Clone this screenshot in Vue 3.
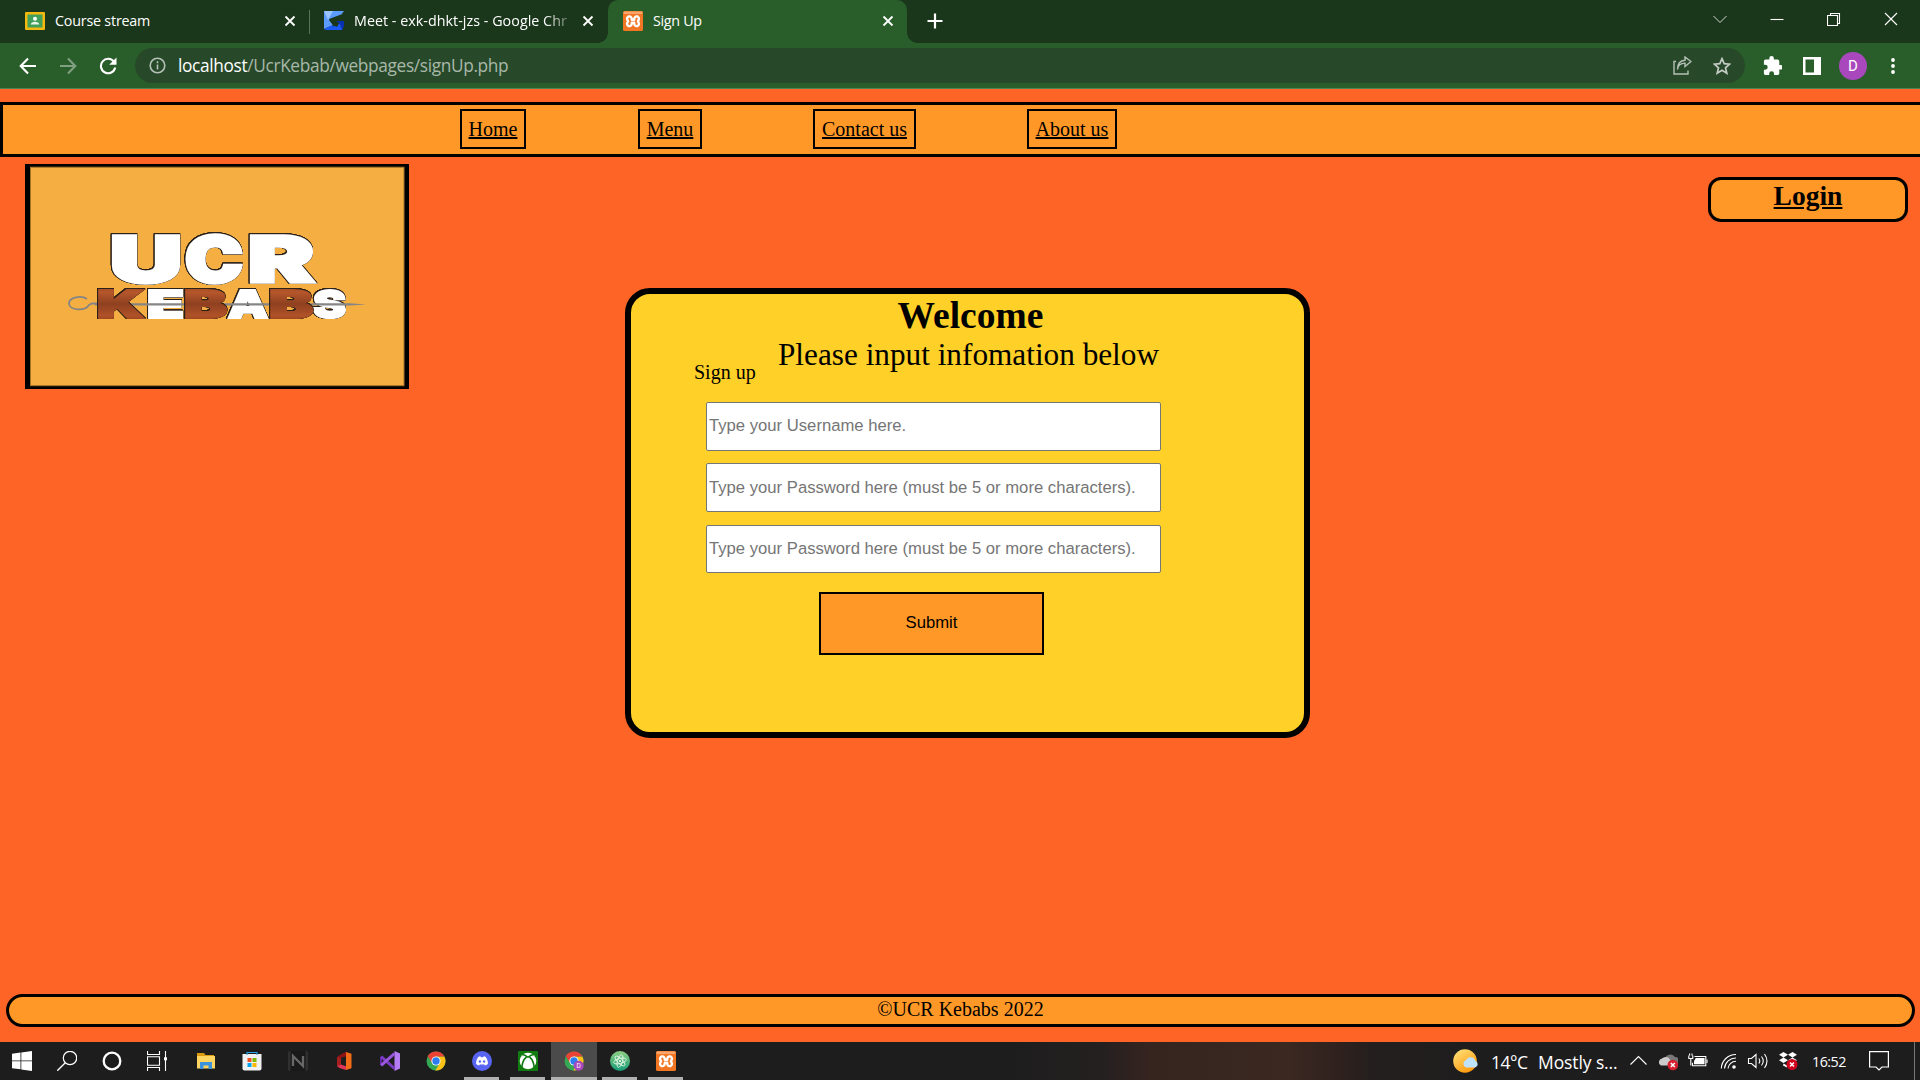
<script setup>
const links = [
  { label: 'Home', w: 66, gap: 112 },
  { label: 'Menu', w: 64, gap: 111 },
  { label: 'Contact us', w: 103, gap: 111 },
  { label: 'About us', w: 90, gap: 0 },
]
const fields = [
  'Type your Username here.',
  'Type your Password here (must be 5 or more characters).',
  'Type your Password here (must be 5 or more characters).',
]
const ucr = [
  { c: 'U', x: 83, w: 76 },
  { c: 'C', x: 158, w: 62 },
  { c: 'R', x: 221, w: 70 },
]
const whites = [
  { c: 'E', x: 121, w: 39 },
  { c: 'A', x: 202, w: 42 },
  { c: 'S', x: 287, w: 35 },
]
const browns = [
  { c: 'K', x: 71, w: 49 },
  { c: 'B', x: 158, w: 45 },
  { c: 'B', x: 243, w: 46 },
]
</script>

<template>
  <div class="screen">
    <svg width="0" height="0" class="defs">
      <defs>
        <symbol id="xampp" viewBox="0 0 20 20">
          <rect width="20" height="20" rx="1.5" fill="#f37623" />
          <rect x=".5" y=".5" width="19" height="2.5" rx="1" fill="#f9a56b" />
          <path d="M5.500 5.500Q8.800 4.800 8.800 8.800H11.200Q11.200 4.800 14.500 5.500 17.200 7 14.900 10.200 17.200 13.400 14.500 15 11.200 15.700 11.200 11.700H8.800Q8.800 15.700 5.500 15 2.800 13.400 5.100 10.200 2.800 7 5.500 5.500z" fill="none" stroke="#fff" stroke-width="2.400" stroke-linejoin="round" />
        </symbol>
        <symbol id="chrome" viewBox="0 0 20 20">
          <circle cx="10" cy="10" r="9.500" fill="#34a853" />
          <path d="M10 5.500h8.300A9.500 9.500 0 0 1 9.200 19.500L14 12z" fill="#fbc116" />
          <path d="M1.800 5.200A9.500 9.500 0 0 1 18.300 5.500H10L6 12z" fill="#ea4335" />
          <circle cx="10" cy="10" r="4.600" fill="#fff" />
          <circle cx="10" cy="10" r="3.700" fill="#2d7df0" />
        </symbol>
      </defs>
    </svg>

    <header class="tabstrip">
      <div class="tab t1">
        <svg class="fav" viewBox="0 0 20 18"><rect width="20" height="18" rx="1" fill="#f4b90e" /><rect x="2.500" y="2.500" width="15" height="13" fill="#43a05a" /><circle cx="10" cy="6.800" r="2" fill="#fff" /><path d="M5.800 12.500c0-3.600 8.400-3.600 8.400 0z" fill="#e8f3ea" /></svg>
        <span class="title a">Course stream</span>
        <svg class="x" viewBox="0 0 12 12"><path d="M1.500 1.500l9 9M10.500 1.500l-9 9" /></svg>
      </div>
      <div class="tab t2">
        <svg class="fav" viewBox="0 0 20 20"><path d="M0 0h20l-3 4-12 5 4 5-9 4z" fill="#5b9bfb" /><path d="M0 0h9L4 9z" fill="#9cc4ff" /><path d="M0 18l9-4 4 2 3-5 4-1v4l-2 5H2z" fill="#1b59f5" /><path d="M12 10h8v4l-2 5-2-6z" fill="#0630ad" /><path d="M17 3.500L5 8l5 8 2-6 4-1z" fill="#1b371b" /></svg>
        <span class="title fade b">Meet - exk-dhkt-jzs - Google Chr</span>
        <svg class="x" viewBox="0 0 12 12"><path d="M1.500 1.500l9 9M10.500 1.500l-9 9" /></svg>
      </div>
      <div class="tab active">
        <svg class="fav"><use href="#xampp" /></svg>
        <span class="title c">Sign Up</span>
        <svg class="x" viewBox="0 0 12 12"><path d="M1.500 1.500l9 9M10.500 1.500l-9 9" /></svg>
      </div>
      <svg class="plus" viewBox="0 0 16 16"><path d="M8 .5v15M.5 8h15" /></svg>
      <div class="winctl">
        <svg viewBox="0 0 14 14"><path d="M.5 4l6.500 6.500L13.500 4" class="thin" /></svg>
        <svg viewBox="0 0 14 14"><path d="M.5 7.500h13" /></svg>
        <svg viewBox="0 0 14 14"><path d="M.5 3.500h10v10H.5zM3.500 3.500V1.500h9v10h-2" /></svg>
        <svg viewBox="0 0 14 14"><path d="M1 1l12 12M13 1L1 13" /></svg>
      </div>
    </header>

    <div class="toolbar">
      <svg class="nav n1" viewBox="0 0 18 18"><path d="M17 9H2M9 1.500L1.700 9 9 16.500" /></svg>
      <svg class="nav n2" viewBox="0 0 18 18"><path d="M1 9h15M9 1.500L16.300 9 9 16.500" /></svg>
      <svg class="nav n3" viewBox="0 0 18 18"><path d="M15 4.800A7.200 7.200 0 1 0 16.200 10.500" /><path d="M17.500.5v7.300h-7.300z" class="solid" /></svg>
      <div class="omnibox">
        <svg class="info" viewBox="0 0 17 17"><circle cx="8.500" cy="8.500" r="7.300" /><path d="M8.500 7.500v5M8.500 4.300v2" /></svg>
        <span class="url"><b>localhost</b>/UcrKebab/webpages/signUp.php</span>
        <svg class="share" viewBox="0 0 19 19"><path d="M3 5.500H1v12.500h14v-3.500" /><path d="M4.500 13.500c.4-4.500 3.400-6.300 7.500-6.400v3.500l6-5.100-6-4.500v3.300c-5.500.3-7.500 4.200-7.500 9.200z" /></svg>
        <svg class="star" viewBox="0 0 18 18"><path d="M9 1.700l2.200 5 5.400.5-4.100 3.600 1.300 5.400L9 13.300l-4.800 2.900 1.300-5.400-4.100-3.600 5.400-.5z" /></svg>
      </div>
      <svg class="puzzle" viewBox="1 1 21 21"><path d="M20.500 11H19V7c0-1.100-.9-2-2-2h-4V3.500a2.500 2.500 0 0 0-5 0V5H4c-1.100 0-2 .9-2 2v3.800h1.500a2.700 2.700 0 0 1 0 5.400H2V20c0 1.100.9 2 2 2h3.800v-1.500a2.700 2.700 0 0 1 5.400 0V22H17c1.100 0 2-.9 2-2v-4h1.500a2.500 2.500 0 0 0 0-5z" fill="#fff" /></svg>
      <svg class="panel" viewBox="0 0 18 18"><path d="M0 0h18v18H0zM2.500 2.500v13H11v-13z" fill="#fff" fill-rule="evenodd" /></svg>
      <span class="avatar">D</span>
      <svg class="dots" viewBox="0 0 4 16"><circle cx="2" cy="2" r="1.900" /><circle cx="2" cy="8" r="1.900" /><circle cx="2" cy="14" r="1.900" /></svg>
    </div>

    <main class="page">
      <nav class="menu">
        <a v-for="l in links" :key="l.label" :style="{ width: l.w + 'px', marginRight: l.gap + 'px' }">{{ l.label }}</a>
      </nav>

      <div class="top">
        <svg class="logo" viewBox="0 0 384 225">
          <defs>
            <linearGradient id="meat" x1="0" y1="0" x2="0" y2="1">
              <stop offset="0" stop-color="#93431f" /><stop offset=".25" stop-color="#b5562b" /><stop offset=".5" stop-color="#8f4020" /><stop offset=".75" stop-color="#b05228" /><stop offset="1" stop-color="#7f3516" />
            </linearGradient>
          </defs>
          <rect width="384" height="225" fill="#000" />
          <rect x="5.500" y="3.200" width="373.500" height="218.500" fill="#f5ae41" stroke="#a8742a" />
          <g class="big face"><text v-for="l in ucr" :key="l.c" :x="l.x + 2" y="117.500" :textLength="l.w - 4" lengthAdjust="spacingAndGlyphs">{{ l.c }}</text></g>
          <g class="small face"><text v-for="l in whites" :key="l.c" :x="l.x + 1" y="154" :textLength="l.w - 2" lengthAdjust="spacingAndGlyphs">{{ l.c }}</text></g>
          <path d="M62 135c-5-3.500-18-2.500-18 4.500s16 8 20 1.500l3-1.500h10" fill="none" stroke="#858585" stroke-width="1.800" />
          <path d="M70 139.300h255l16 1.200-16 1.100H70z" fill="#858585" />
          <g class="small meat"><text v-for="l in browns" :key="l.x" :x="l.x + 1" y="154" :textLength="l.w - 2" lengthAdjust="spacingAndGlyphs">{{ l.c }}</text></g>
        </svg>
        <a class="login">Login</a>
      </div>

      <section class="card">
        <h1>Welcome</h1>
        <p class="lead">Please input infomation below</p>
        <p class="sign">Sign up</p>
        <form>
          <input v-for="(f, i) in fields" :key="i" :placeholder="f" />
          <button type="button">Submit</button>
        </form>
      </section>

      <footer class="foot">©UCR Kebabs 2022</footer>
    </main>

    <div class="taskbar">
      <span class="sys"><svg viewBox="0 0 20 20"><path d="M0 2.800l8.500-1.200V9.500H0zM9.300 1.500L20 0v9.500H9.300zM0 10.300h8.500v8L0 17.200zM9.300 10.300H20V20L9.300 18.500z" fill="#fff" /></svg></span>
      <span class="sys"><svg viewBox="0 0 20 20"><circle cx="13" cy="7" r="6.700" fill="none" stroke="#fff" stroke-width="1.200" /><path d="M8.300 11.800L.3 19.700" stroke="#fff" stroke-width="1.400" /></svg></span>
      <span class="sys"><svg viewBox="0 0 20 20"><circle cx="10" cy="10" r="8.300" fill="none" stroke="#fff" stroke-width="2.300" /></svg></span>
      <span class="sys tv"><svg viewBox="0 0 20 20"><path d="M.5 0v3.500h12V0M.5 20v-3.500h12V20M.5 5.800h12v8.400H.5zM18.500 0v20" fill="none" stroke="#fff" stroke-width="1.100" /><path d="M17 6.300h3v3h-3z" fill="#fff" /></svg></span>
      <i class="sp"></i>
      <span class="app"><svg viewBox="0 0 20 20"><path d="M1 2h7l1.500 2H18v4H1z" fill="#dc9a13" /><path d="M1 5h18v12.500H1z" fill="#ffd561" /><path d="M4 11h12v7h-3.500v-3.500h-5V18H4z" fill="#3b93dd" /></svg></span>
      <span class="app"><svg viewBox="0 0 20 20"><path d="M.5 3h19v14.500q0 2-2 2h-15q-2 0-2-2z" fill="#f1f1f1" /><path d="M5.500 7h4v4h-4z" fill="#f25022" /><path d="M10.500 7h4v4h-4z" fill="#7fba00" /><path d="M5.500 12h4v4h-4z" fill="#00a4ef" /><path d="M10.500 12h4v4h-4z" fill="#ffb900" /><path d="M5 4V1.500h10V4" fill="none" stroke="#26a6e8" stroke-width="1.100" /></svg></span>
      <span class="app"><svg viewBox="0 0 20 20"><rect width="20" height="20" rx="2" fill="#303030" /><rect x="2.500" width="15" height="20" fill="#191919" /><path d="M5 15V5l10 10V5" fill="none" stroke="#686868" stroke-width="2.300" /></svg></span>
      <span class="app"><svg viewBox="0 0 20 20"><path d="M12 1l5.500 1.700v14.500L12 19z" fill="#f26b16" /><path d="M12 1v4L7 6.500v7L3 15.500V6z" fill="#a71e1e" /><path d="M3 15l4-1.500 5 1.700V19L5.500 17z" fill="#e13556" /><path d="M12 1v4l-4.500 1.500-4.500.5 3-3z" fill="#8e1414" /></svg></span>
      <span class="app"><svg viewBox="0 0 20 20"><path d="M14.500 0L20 2.500v15L14.500 20z" fill="#b57cf4" /><path d="M0 6l2-1.200v10.400L0 14z" fill="#6024a5" /><path d="M1.200 5.700L14.500 17.500" stroke="#7b3cc4" stroke-width="3" /><path d="M1.200 14.300l13.300-11.800" stroke="#9b58df" stroke-width="3" /></svg></span>
      <span class="app"><svg><use href="#chrome" /></svg></span>
      <span class="app run"><svg viewBox="0 0 20 20"><circle cx="10" cy="10" r="10" fill="#5865f2" /><path d="M6.500 5.800L8.300 5.300l.6.900h2.200l.6-.9 1.800.5c1.900 2.200 2.500 4.700 2.400 7.200-1 .9-2 1.400-3 1.600l-.8-1.300c-1.200.4-3 .4-4.200 0l-.8 1.300c-1-.2-2-.7-3-1.600-.1-2.500.5-5 2.400-7.200z" fill="#fff" /><circle cx="7.900" cy="10.500" r="1.200" fill="#5865f2" /><circle cx="12.100" cy="10.500" r="1.200" fill="#5865f2" /></svg></span>
      <span class="app run"><svg viewBox="0 0 20 20"><rect width="20" height="20" rx="1" fill="#107c10" /><circle cx="10" cy="10" r="8.300" fill="#fff" /><path d="M4 3.500Q7 3.500 10 6.300 13 3.500 16 3.500" fill="none" stroke="#107c10" stroke-width="1.400" /><path d="M8.500 5.800C5.500 8.500 4 12 3.800 17M11.500 5.800c3 2.700 4.500 6.200 4.700 11.200" fill="none" stroke="#107c10" stroke-width="1.700" /></svg></span>
      <span class="app run on"><svg viewBox="0 0 20 20"><use href="#chrome" /><circle cx="14.700" cy="14.700" r="5" fill="#a948bd" /><text x="14.700" y="17" text-anchor="middle" class="mini">D</text></svg></span>
      <span class="app run"><svg viewBox="0 0 20 20"><defs><linearGradient id="atom" x1="0" y1="0" x2="0" y2="1"><stop offset="0" stop-color="#8fcf82" /><stop offset="1" stop-color="#159b77" /></linearGradient></defs><circle cx="10" cy="10" r="10" fill="url(#atom)" /><g fill="none" stroke="#e4f5e8" stroke-width=".9"><ellipse cx="10" cy="10" rx="6.500" ry="2.500" transform="rotate(-15 10 10)" /><ellipse cx="10" cy="10" rx="6.500" ry="2.500" transform="rotate(45 10 10)" /><ellipse cx="10" cy="10" rx="6.500" ry="2.500" transform="rotate(105 10 10)" /></g><circle cx="10" cy="10" r="1" fill="#fff" /></svg></span>
      <span class="app run"><svg><use href="#xampp" /></svg></span>

      <div class="tray">
        <svg class="sun" viewBox="0 0 26 24"><defs><linearGradient id="sun" x1="0" y1="0" x2=".6" y2="1"><stop offset="0" stop-color="#ffe680" /><stop offset="1" stop-color="#ff9a0c" /></linearGradient></defs><circle cx="12" cy="12" r="11.800" fill="url(#sun)" /><path d="M13 18.500a4 4 0 0 1 0-7.500 5 5 0 0 1 9.200.8 3.500 3.500 0 0 1 0 6.700z" fill="#bfe2fb" /></svg>
        <span class="temp">14°C</span><span class="cond">Mostly s...</span>
        <svg class="i up" viewBox="0 0 20 20"><path d="M2.500 13.500L10.500 5.500l8 8" /></svg>
        <svg class="i cloud" viewBox="0 0 20 20"><path d="M7 10a5.500 5.500 0 0 1 10-4 4 4 0 0 1 0 8z" fill="#777" /><path d="M3 14.500a3.700 3.700 0 0 1 1-7 5 5 0 0 1 8 1l3 6z" fill="#ccc" /><circle cx="14.800" cy="14" r="5.300" fill="#d6202f" /><path d="M12.800 12l4 4M16.800 12l-4 4" class="w" /></svg>
        <svg class="i bat" viewBox="0 0 20 20"><path d="M6.500 5.500h11.300v9.300H4.500v-3" /><path d="M7.800 7h8.700v6.300H6V10z" fill="#fff" stroke="none" /><path d="M19 8.500v3.500M.8 4.500v3h4v-3M1.600 2.500v2M4 2.500v2M2.800 7.500v7" /></svg>
        <svg class="i wifi" viewBox="0 0 20 20"><path d="M2.300 17.500A14.500 14.500 0 0 1 17 3.500M5.500 17.500A11.300 11.300 0 0 1 17 7M9 17.500a8 8 0 0 1 8-7.200M4 17.500" /><circle cx="15" cy="16" r="1.800" fill="#fff" stroke="none" /></svg>
        <svg class="i vol" viewBox="0 0 22 20"><path d="M1.500 7.500h3l4.500-4v13l-4.500-4h-3zM11.800 7.500q2 2.500 0 5M14.500 5.500q3.500 4.500 0 9M17.500 3q5 7 0 14" /></svg>
        <svg class="i drop" viewBox="0 0 20 20"><g fill="#fff" stroke="none"><path d="M5.500 1l4.500 2.700-4.500 2.800L1 3.700zM14.500 1L19 3.700l-4.500 2.800L10 3.700zM5.500 6.500L10 9.200 5.500 12 1 9.200zM14.500 6.500L19 9.200 14.500 12 10 9.200zM5.500 12.500L9 14.500v2l-4-2z" /></g><circle cx="14" cy="13.500" r="5.500" fill="#d0021b" stroke="none" /><path d="M12 11.500l4 4M16 11.500l-4 4" class="w" /></svg>
        <span class="clock">16:52</span>
        <svg class="note" viewBox="0 0 20 20"><path d="M.6.600h18.800v15.400h-6.400l-3 3-3-3H.6z" /></svg>
        <i class="desk"></i>
      </div>
    </div>
  </div>
</template>

<style>
body { margin: 0; overflow: hidden; }
</style>

<style scoped>
* { box-sizing: border-box; }
.screen { width: 1920px; height: 1080px; display: flex; flex-direction: column; overflow: hidden; font-family: "Open Sans", "Noto Sans", sans-serif; }
.defs { position: absolute; }
svg { display: block; flex: none; }

.tabstrip { height: 43px; background: #1b371b; display: flex; align-items: center; color: #fff; flex: none; }
.tab { height: 43px; display: flex; align-items: center; position: relative; padding-bottom: 2px; }
.fav { width: 20px; height: 20px; }
.t1 .fav { height: 18px; }
.title { font-size: 14.3px; white-space: nowrap; line-height: 20px; }
.a { letter-spacing: -.2px; }
.b { letter-spacing: .03px; }
.c { letter-spacing: -.3px; }
.x { width: 12px; height: 12px; margin-left: auto; }
.x path { stroke: #fff; stroke-width: 1.8; }
.t1 { width: 311px; padding: 0 15px 2px 25px; }
.t1 .title, .t2 .title { margin-left: 10px; }
.t1::after { content: ""; position: absolute; right: 1px; top: 10px; width: 1px; height: 24px; background: #557455; }
.t2 { width: 297px; padding: 0 14px 2px 13px; }
.fade { width: 221px; -webkit-mask-image: linear-gradient(90deg, #000 190px, transparent 225px); mask-image: linear-gradient(90deg, #000 190px, transparent 225px); }
.t2 .x { margin-left: auto; }
.active { width: 299px; background: #295e2a; border-radius: 10px 10px 0 0; padding: 0 13px 2px 15px; }
.active .title { margin-left: 10px; }
.active::before, .active::after { content: ""; position: absolute; bottom: 0; width: 10px; height: 10px; }
.active::before { left: -10px; background: radial-gradient(circle at 0 0, transparent 9.500px, #295e2a 10px); }
.active::after { right: -10px; background: radial-gradient(circle at 100% 0, transparent 9.500px, #295e2a 10px); }
.plus { width: 16px; height: 16px; margin-left: 20px; margin-bottom: 1px; }
.plus path { stroke: #fff; stroke-width: 2.2; }
.winctl { margin-left: auto; display: flex; gap: 43px; padding-right: 22px; margin-bottom: 6px; }
.winctl svg { width: 14px; height: 14px; }
.winctl path { fill: none; stroke: #fff; stroke-width: 1.1; }
.winctl .thin { stroke-width: .8; }

.toolbar { height: 46px; background: #295e2a; border-bottom: 1px solid #4f8153; display: flex; align-items: center; flex: none; }
.nav { width: 18px; height: 18px; fill: none; stroke: #fff; stroke-width: 2.1; }
.n1 { margin-left: 18.500px; }
.n2 { margin-left: 22px; stroke: #80a081; }
.n3 { margin-left: 22.500px; }
.solid { fill: #fff; stroke: none; }
.omnibox { margin-left: 18px; width: 1610px; height: 35px; border-radius: 18px; background: #27492a; display: flex; align-items: center; flex: none; }
.info { width: 17px; height: 17px; margin-left: 14px; fill: none; stroke: #b5c0b6; stroke-width: 1.6; }
.url { margin-left: 12px; font-size: 17.300px; letter-spacing: -.35px; color: #a9b8a9; line-height: 24px; white-space: nowrap; }
.url b { font-weight: 400; color: #fff; }
.share { width: 19px; height: 19px; margin-left: auto; fill: none; stroke: #b5c0b6; stroke-width: 1.4; }
.star { width: 18px; height: 18px; margin: 0 14px 0 21px; fill: none; stroke: #c3cdc4; stroke-width: 1.7; }
.puzzle { width: 19px; height: 19px; margin-left: 18px; }
.panel { width: 18px; height: 18px; margin-left: 21px; }
.avatar { width: 28px; height: 28px; border-radius: 50%; background: #a948bd; color: #fff; font: 15px/28px Roboto, sans-serif; text-align: center; margin-left: 18px; }
.dots { width: 4px; height: 16px; margin-left: 23.500px; fill: #fff; }

.page { height: 953px; background: #ff6427; font-family: "Liberation Serif", "Times New Roman", serif; font-size: 20px; color: #000; display: flex; flex-direction: column; flex: none; overflow: hidden; }
.menu { margin-top: 13px; height: 55px; background: #ff9826; border: 3px solid #000; border-right: 0; padding: 4px 0 0 457px; display: flex; align-items: flex-start; flex: none; }
.menu a { height: 40px; border: 2px solid #000; text-decoration: underline; line-height: 36px; text-align: center; flex: none; white-space: nowrap; }
.top { display: flex; justify-content: space-between; height: 131px; padding: 7px 12px 0 25px; flex: none; }
.logo { width: 384px; height: 225px; }
.login { width: 200px; height: 45px; margin-top: 13px; border: 3px solid #000; border-radius: 13px; background: #ff9826; font-size: 27.500px; font-weight: 700; text-decoration: underline; text-align: center; line-height: 31px; }
.big, .small { font-family: Inter, "Open Sans", sans-serif; font-weight: 900; filter: drop-shadow(.8px 0 0 #2b2118) drop-shadow(-.8px 0 0 #2b2118) drop-shadow(0 .7px 0 #2b2118) drop-shadow(0 -.7px 0 #2b2118); }
.big { font-size: 63px; }
.small { font-size: 38px; }
.face { fill: #fff; stroke: #fff; }
.big.face { stroke-width: 3.500px; }
.small.face, .meat { stroke-width: 2.200px; }
.meat { fill: url(#meat); stroke: url(#meat); }

.card { width: 685px; height: 450px; margin-left: 625px; border: 6px solid #000; border-radius: 25px; background: #ffd027; flex: none; }
h1 { margin: 0; padding-left: 6px; font-size: 37.500px; line-height: 43px; text-align: center; }
.lead { margin: 0; padding-left: 2px; font-size: 31.250px; line-height: 36px; text-align: center; }
.sign { margin: -12px 0 0 63px; line-height: 22px; }
form { margin-left: 75px; margin-top: 19px; display: flex; flex-direction: column; }
input { width: 455px; height: 48.750px; border: 1px solid #767676; border-radius: 2px; padding: 1px 2px; font: 16.667px "Liberation Sans", Arial, sans-serif; margin: 0 0 12.500px; background: #fff; }
input::placeholder { color: #757575; opacity: 1; }
button { width: 225px; height: 63px; margin: 6px 0 0 113px; border: 2px solid #000; background: #ff9826; color: #000; font: 16.667px "Liberation Sans", Arial, sans-serif; padding: 0; }
.foot { margin: 256px 5px 0 6px; height: 33px; border: 3px solid #000; border-radius: 17px; background: #ff9826; text-align: center; line-height: 25px; flex: none; }

.taskbar { height: 38px; background: linear-gradient(90deg, #1d1d1d 1000px, #242020 1100px, #36241f 1150px, #3a2821 1290px, #2f211e 1340px, #241f1e 1370px, #1d1d1d 1480px); display: flex; align-items: stretch; color: #fff; flex: none; }
.sys { width: 45px; display: flex; justify-content: center; align-items: center; }
.sys:first-child { margin-left: -1px; }
.tv { width: 46px; }
.sp { width: 3px; }
.sys svg, .app svg { width: 20px; height: 20px; }
.app { width: 46px; display: flex; justify-content: center; align-items: center; position: relative; }
.run::after { content: ""; position: absolute; left: 5px; bottom: 0; width: 35px; height: 3px; background: #b0b0b0; }
.on { background: #4b4b4b; }
.on::after { left: 0; width: 46px; }
.mini { font: 6.500px Roboto, sans-serif; fill: #fff; }
.tray { margin-left: auto; display: flex; align-items: center; }
.sun { width: 26px; height: 24px; }
.temp, .cond { font-size: 17.500px; line-height: 26px; white-space: nowrap; margin-top: 2px; }
.temp { width: 47px; margin-left: 12px; letter-spacing: -.5px; }
.cond { width: 90px; letter-spacing: -.1px; }
.i { width: 20px; height: 20px; fill: none; stroke: #fff; stroke-width: 1.1; }
.i path[fill], .i circle { stroke: none; }
.i .w { stroke: #fff; stroke-width: 1.500; }
.cloud { margin-left: 10px; }
.bat { margin-left: 10px; }
.wifi { margin-left: 11px; }
.vol { width: 22px; margin-left: 8px; }
.drop { margin-left: 9px; }
.clock { width: 36px; margin-left: 14px; font-size: 14.300px; letter-spacing: -.5px; }
.note { width: 20px; height: 20px; margin-left: 21px; fill: none; stroke: #fff; stroke-width: 1.2; }
.desk { width: 1px; height: 38px; background: #777; margin: 0 5px 0 25px; }
</style>
